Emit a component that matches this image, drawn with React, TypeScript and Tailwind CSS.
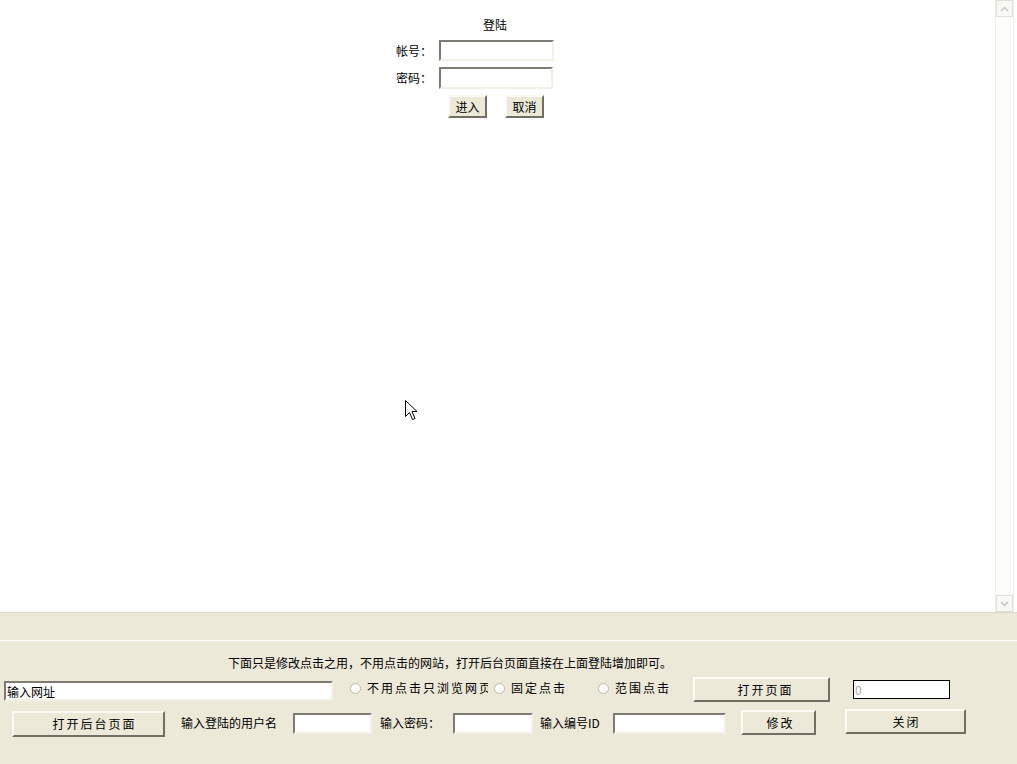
import React from 'react';

const font = { fontFamily: '"Noto Sans CJK SC", "Liberation Sans", sans-serif' };

const inset =
    'bg-white border-2 border-t-[#7d7b73] border-l-[#7d7b73] border-r-[#f3f1e6] border-b-[#f3f1e6] outline-none';
const outset =
    'bg-[#ece9d8] border-2 border-t-[#fbfaf5] border-l-[#fbfaf5] border-r-[#716f64] border-b-[#716f64] flex items-center justify-center text-[12px] leading-[14px] text-black';

const Radio: React.FC = () => (
    <span className="inline-block w-[11px] h-[11px] rounded-full border border-[#bdb9aa] bg-white shrink-0" />
);

const ScrollBar: React.FC = () => (
    <div className="w-[22px] h-full flex">
        <div className="w-[19px] h-full flex flex-col border-l border-r border-[#eeede6] bg-[#fdfdfb]">
            <div className="h-[17px] border border-[#e3e1d6] bg-[#f8f8f4] flex items-center justify-center">
                <svg width="9" height="6" viewBox="0 0 9 6">
                    <path d="M1 5 L4.5 1.5 L8 5" fill="none" stroke="#c9c8c0" strokeWidth="1.5" />
                </svg>
            </div>
            <div className="flex-1" />
            <div className="h-[17px] border border-[#e3e1d6] bg-[#f8f8f4] flex items-center justify-center">
                <svg width="9" height="6" viewBox="0 0 9 6">
                    <path d="M1 1 L4.5 4.5 L8 1" fill="none" stroke="#c9c8c0" strokeWidth="1.5" />
                </svg>
            </div>
        </div>
    </div>
);

const App: React.FC = () => {
    return (
        <div className="w-[1017px] h-[764px] flex flex-col overflow-hidden bg-[#ece9d8] text-black relative" style={font}>
            {/* Top frame: login */}
            <div className="h-[612px] bg-white flex">
                <div className="flex-1 flex flex-col pl-[396px] pt-[18px]">
                    <div className="ml-[87px] text-[12px] leading-[14px]">登陆</div>
                    <div className="flex items-center mt-[8px]">
                        <span className="w-[36px] text-[12px] leading-[14px] whitespace-nowrap">帐号：</span>
                        <input className={`${inset} ml-[7px] w-[115px] h-[21px]`} />
                    </div>
                    <div className="flex items-center mt-[6px]">
                        <span className="w-[36px] text-[12px] leading-[14px] whitespace-nowrap">密码：</span>
                        <input className={`${inset} ml-[7px] w-[114px] h-[22px]`} />
                    </div>
                    <div className="flex mt-[6px] ml-[52px] gap-[18px]">
                        <button className={`${outset} w-[39px] h-[23px]`}>进入</button>
                        <button className={`${outset} w-[39px] h-[23px]`}>取消</button>
                    </div>
                </div>
                <ScrollBar />
            </div>

            {/* Bottom frame: settings */}
            <div className="border-t border-[#d9d6c6] h-[28px]" />
            <div className="border-t border-white flex flex-col">
                <div className="pt-[15px] pl-[228px] text-[12px] leading-[14px] whitespace-nowrap">
                    下面只是修改点击之用，不用点击的网站，打开后台页面直接在上面登陆增加即可。
                </div>

                {/* Row 1 */}
                <div className="flex items-start mt-[7px] h-[25px]">
                    <input
                        className={`${inset} ml-[4px] mt-[4px] w-[329px] h-[20px] text-[12px] px-[1px]`}
                        defaultValue="输入网址"
                        style={font}
                    />
                    <div className="flex items-center ml-[17px] mt-[4px]">
                        <Radio />
                        <span className="ml-[6px] w-[121px] overflow-hidden whitespace-nowrap text-[12px] leading-[14px] tracking-[2px]">
                            不用点击只浏览网页
                        </span>
                    </div>
                    <div className="flex items-center ml-[6px] mt-[4px]">
                        <Radio />
                        <span className="ml-[6px] w-[56px] whitespace-nowrap text-[12px] leading-[14px] tracking-[2px]">固定点击</span>
                    </div>
                    <div className="flex items-center ml-[31px] mt-[4px]">
                        <Radio />
                        <span className="ml-[6px] w-[56px] whitespace-nowrap text-[12px] leading-[14px] tracking-[2px]">范围点击</span>
                    </div>
                    <button className={`${outset} ml-[22px] w-[137px] h-[25px] tracking-[2px] pl-[8px]`}>打开页面</button>
                    <input
                        className="ml-[23px] mt-[3px] w-[97px] h-[19px] bg-white border border-black text-[12px] px-[1px] text-[#a8a8a8] outline-none"
                        defaultValue="0"
                        style={font}
                    />
                </div>

                {/* Row 2 */}
                <div className="flex items-start mt-[6px] h-[30px]">
                    <button className={`${outset} ml-[12px] mt-[3px] w-[153px] h-[26px] tracking-[2px] pl-[12px]`}>打开后台页面</button>
                    <span className="ml-[16px] mt-[8px] w-[112px] text-[12px] leading-[14px] whitespace-nowrap">输入登陆的用户名</span>
                    <input className={`${inset} mt-[5px] w-[79px] h-[21px]`} />
                    <span className="ml-[8px] mt-[8px] w-[73px] text-[12px] leading-[14px] whitespace-nowrap">输入密码：</span>
                    <input className={`${inset} mt-[5px] w-[80px] h-[21px]`} />
                    <span className="ml-[7px] mt-[8px] w-[73px] text-[12px] leading-[14px] whitespace-nowrap">输入编号ID</span>
                    <input className={`${inset} mt-[5px] w-[113px] h-[21px]`} />
                    <button className={`${outset} ml-[15px] mt-[2px] w-[75px] h-[25px] tracking-[2px] pl-[4px]`}>修改</button>
                    <button className={`${outset} ml-[29px] mt-[1px] w-[121px] h-[25px] tracking-[2px] pl-[2px]`}>关闭</button>
                </div>
            </div>

            {/* Mouse pointer */}
            <svg className="absolute left-[405px] top-[400px]" width="13" height="21" viewBox="0 0 13 21">
                <path d="M0.5 0.5 L0.5 16.5 L4.5 12.5 L7.5 19.5 L10 18.5 L7 11.5 L12 11.5 Z" fill="white" stroke="black" strokeWidth="1" />
            </svg>
        </div>
    );
};

export default App;
